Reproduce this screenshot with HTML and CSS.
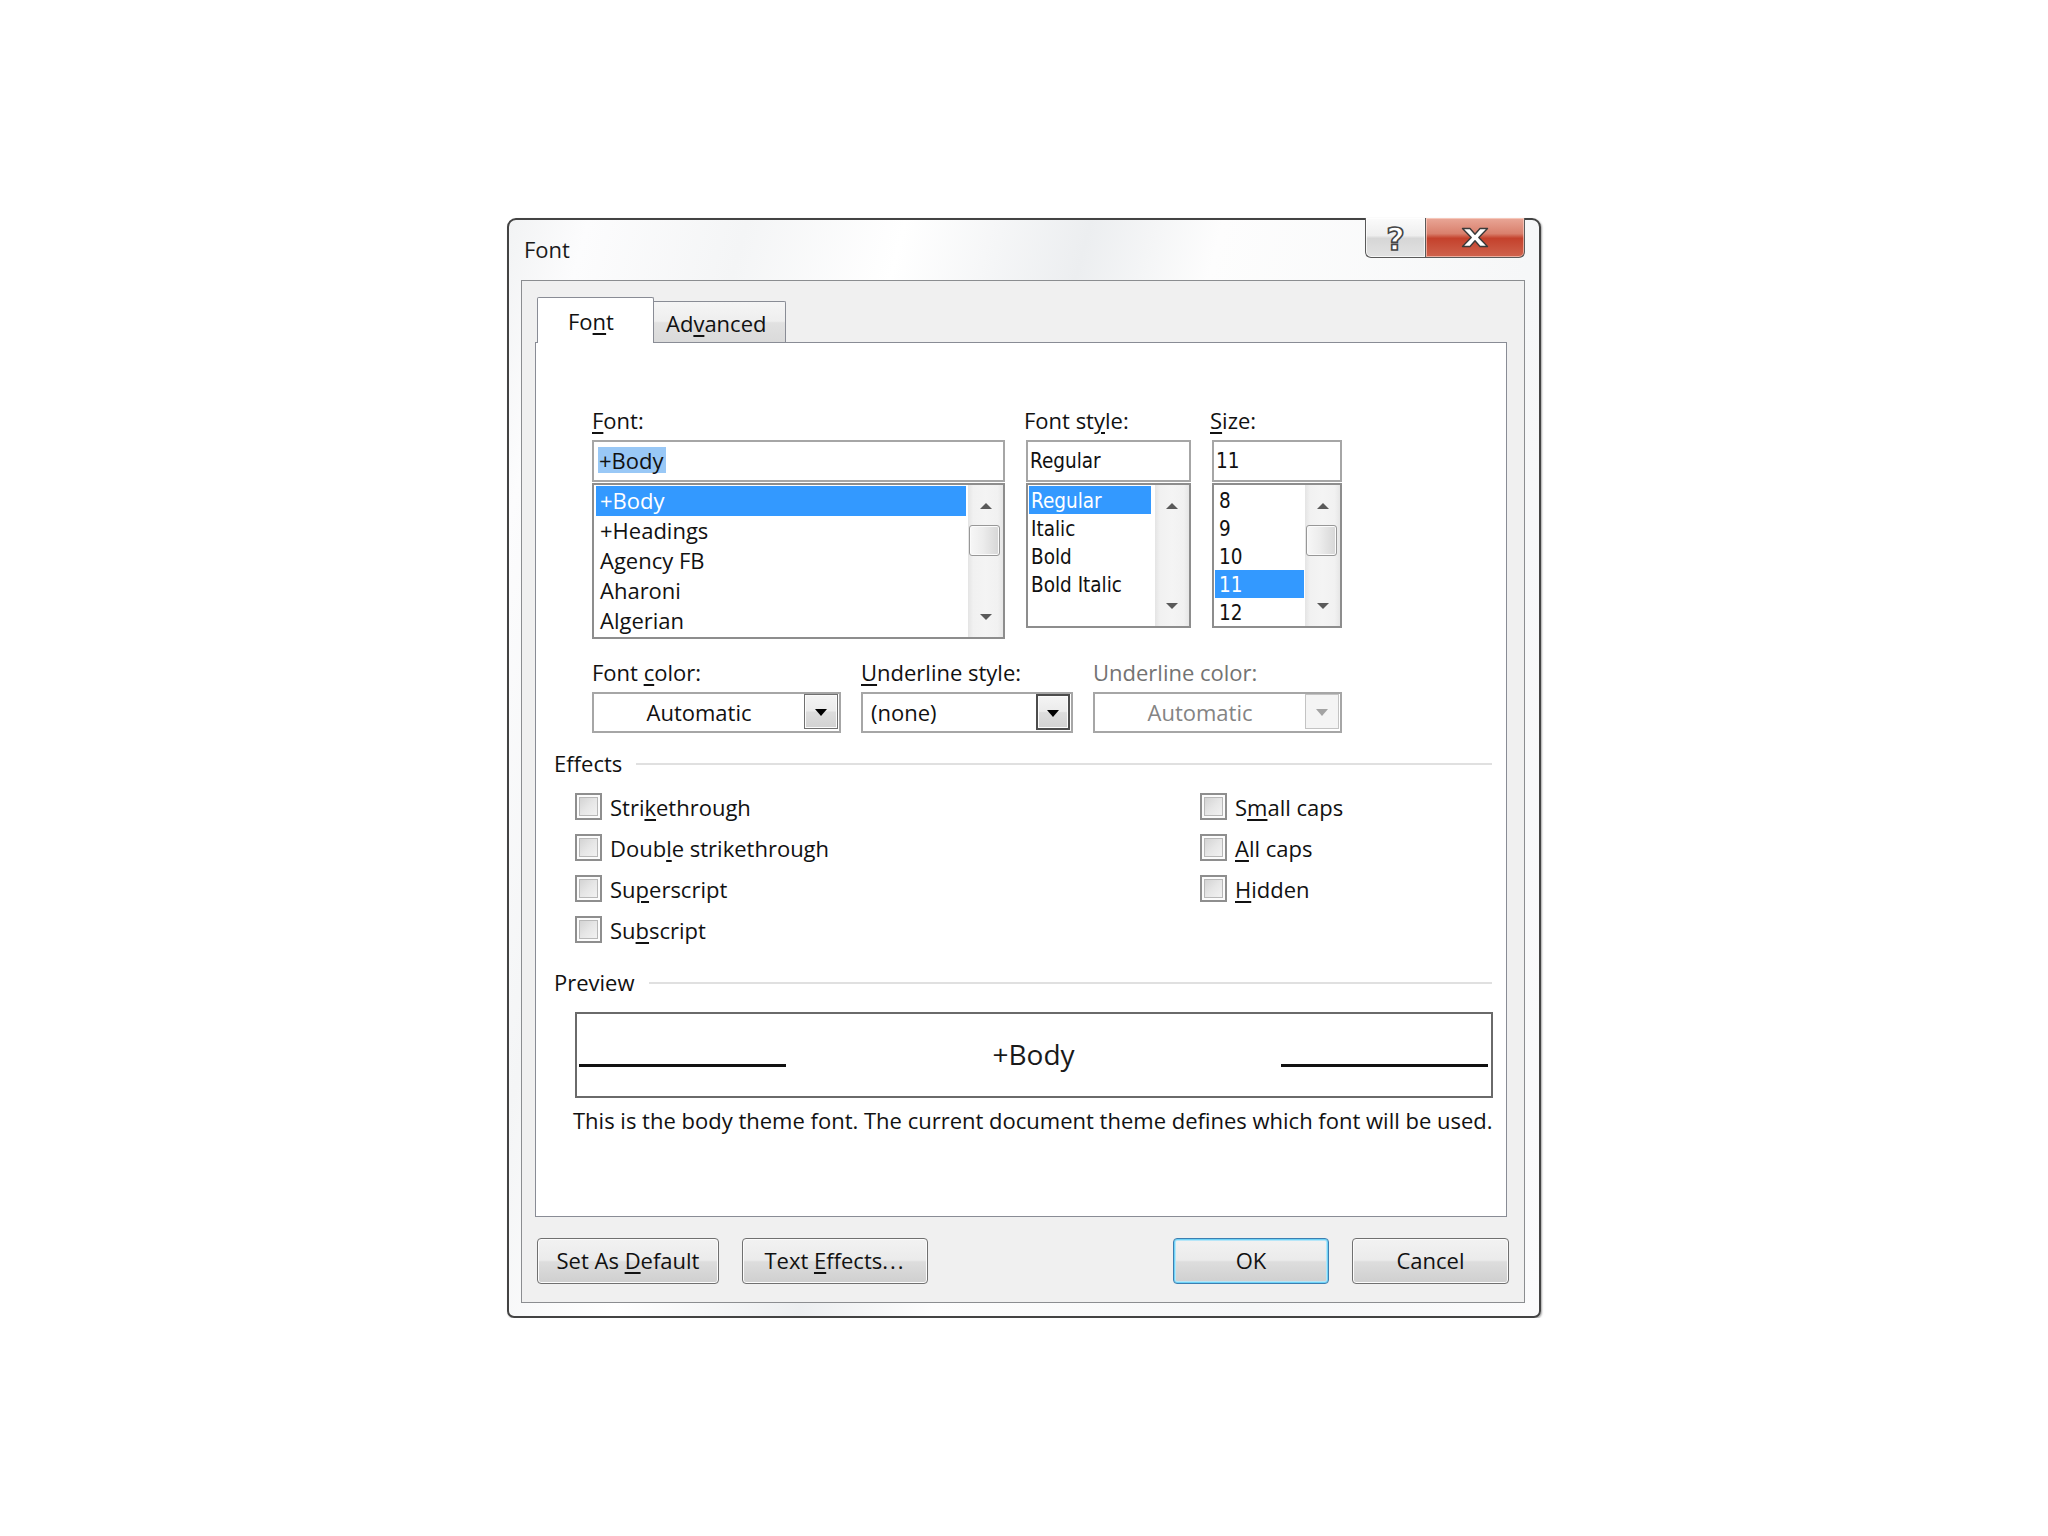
FILE: index.html
```html
<!DOCTYPE html>
<html lang="en">
<head>
<meta charset="utf-8">
<title>Font</title>
<link rel="stylesheet" href="styles.css">
</head>
<body>
<div class="window">
  <div class="titlebar">
    <span class="title">Font</span>
    <div class="caption-btns">
      <div class="cap help"><span class="qmark">?</span></div>
      <div class="cap close">
        <svg width="28" height="21" viewBox="0 0 28 21"><path d="M1.5 1.5H9L14 7.2L19 1.5H26.5L17.8 10.5L26.5 19.5H19L14 13.8L9 19.5H1.5L10.2 10.5Z" fill="#ffffff" stroke="#3a3a3a" stroke-width="1.4" stroke-linejoin="round"/></svg>
      </div>
    </div>
  </div>
  <div class="client">
    <div class="tabs">
      <div class="tab active">Fo<u>n</u>t</div>
      <div class="tab inactive">Ad<u>v</u>anced</div>
    </div>
    <div class="panel">
      <div class="row1">
        <div class="field">
          <span class="label"><u>F</u>ont:</span>
          <div class="input"><span class="hl">+Body</span></div>
          <div class="listbox lb-font">
            <ul class="items">
              <li class="sel">+Body</li>
              <li>+Headings</li>
              <li>Agency FB</li>
              <li>Aharoni</li>
              <li>Algerian</li>
            </ul>
            <div class="scrollbar">
              <div class="sb-btn up"><i class="arr-up"></i></div>
              <div class="thumb"></div>
              <div class="sb-fill"></div>
              <div class="sb-btn down"><i class="arr-down"></i></div>
            </div>
          </div>
        </div>
        <div class="field">
          <span class="label">Font st<u>y</u>le:</span>
          <div class="input tah">Regular</div>
          <div class="listbox lb-style">
            <ul class="items tah">
              <li class="sel">Regular</li>
              <li>Italic</li>
              <li>Bold</li>
              <li>Bold Italic</li>
            </ul>
            <div class="scrollbar">
              <div class="sb-btn up"><i class="arr-up"></i></div>
              <div class="sb-fill"></div>
              <div class="sb-btn down"><i class="arr-down"></i></div>
            </div>
          </div>
        </div>
        <div class="field">
          <span class="label"><u>S</u>ize:</span>
          <div class="input tah">11</div>
          <div class="listbox lb-size">
            <ul class="items tah">
              <li>8</li>
              <li>9</li>
              <li>10</li>
              <li class="sel">11</li>
              <li>12</li>
            </ul>
            <div class="scrollbar">
              <div class="sb-btn up"><i class="arr-up"></i></div>
              <div class="thumb"></div>
              <div class="sb-fill"></div>
              <div class="sb-btn down"><i class="arr-down"></i></div>
            </div>
          </div>
        </div>
      </div>

      <div class="row2">
        <div class="field">
          <span class="label">Font <u>c</u>olor:</span>
          <div class="combo">
            <div class="combo-text center">Automatic</div>
            <div class="dd-btn"><i class="arr-dd"></i></div>
          </div>
        </div>
        <div class="field">
          <span class="label"><u>U</u>nderline style:</span>
          <div class="combo">
            <div class="combo-text left">(none)</div>
            <div class="dd-btn focus"><i class="arr-dd"></i></div>
          </div>
        </div>
        <div class="field disabled">
          <span class="label">Underline color:</span>
          <div class="combo">
            <div class="combo-text center">Automatic</div>
            <div class="dd-btn"><i class="arr-dd"></i></div>
          </div>
        </div>
      </div>

      <div class="group-head effects-head"><span>Effects</span><div class="rule"></div></div>
      <div class="effects">
        <div class="check"><span class="box"></span><span>Stri<u>k</u>ethrough</span></div>
        <div class="check"><span class="box"></span><span>Doub<u>l</u>e strikethrough</span></div>
        <div class="check"><span class="box"></span><span>Su<u>p</u>erscript</span></div>
        <div class="check"><span class="box"></span><span>Su<u>b</u>script</span></div>
        <div class="check"><span class="box"></span><span>S<u>m</u>all caps</span></div>
        <div class="check"><span class="box"></span><span><u>A</u>ll caps</span></div>
        <div class="check"><span class="box"></span><span><u>H</u>idden</span></div>
      </div>

      <div class="group-head preview-head"><span>Preview</span><div class="rule"></div></div>
      <div class="preview-box">
        <div class="pline"></div>
        <div class="ptext">+Body</div>
        <div class="pline"></div>
      </div>
      <p class="desc">This is the body theme font. The current document theme defines which font will be used.</p>
    </div>

    <div class="buttons">
      <div class="btn w-default">Set As <u>D</u>efault</div>
      <div class="btn w-effects">Text <u>E</u>ffects<span class="dots">...</span></div>
      <div class="spacer"></div>
      <div class="btn ok w-ok">OK</div>
      <div class="btn w-cancel">Cancel</div>
    </div>
  </div>
</div>
</body>
</html>
```

FILE: styles.css
```css
* { box-sizing: border-box; }

html, body {
  margin: 0;
  padding: 0;
  background: #ffffff;
}

body {
  font-family: "Open Sans", "Noto Sans", sans-serif;
  font-size: 22px;
  line-height: 26px;
  color: #111111;
}

u {
  text-decoration: underline;
  text-decoration-thickness: 2px;
  text-underline-offset: 3px;
}

/* ---------- window frame ---------- */
.window {
  width: 1034px;
  height: 1100px;
  margin: 218px 0 0 507px;
  border: 2px solid #434343;
  border-radius: 9px 9px 7px 7px;
  background: linear-gradient(105deg, #f2f3f4 0%, #fcfcfd 6%, #f4f5f6 18%, #ffffff 30%, #eceef0 44%, #fdfdfd 54%, #f6f7f8 78%, #fbfbfc 100%);
  display: flex;
  flex-direction: column;
  box-shadow: 1px 1px 2px rgba(0,0,0,0.35);
}

.titlebar {
  height: 60px;
  flex: none;
  display: flex;
  justify-content: space-between;
  align-items: flex-start;
  padding: 0 14px 0 15px;
}

.title {
  padding-top: 16px;
  color: #1a1a1a;
}

.caption-btns {
  display: flex;
  margin-top: -2px;
}

.cap {
  height: 40px;
  border: 1px solid #5a5a5a;
  border-top: none;
  display: flex;
  align-items: center;
  justify-content: center;
}

.help {
  width: 60px;
  border-right: none;
  border-radius: 0 0 0 6px;
  background: linear-gradient(#fbfbfb 0%, #eeeeee 45%, #d6d6d6 52%, #e2e2e2 100%);
  box-shadow: inset 0 0 0 1px rgba(255,255,255,0.7);
}

.qmark {
  font-family: "DejaVu Sans", sans-serif;
  font-weight: bold;
  font-size: 32px;
  line-height: 32px;
  color: #ffffff;
  -webkit-text-stroke: 1.6px #454545;
  margin-top: 3px;
}

.close {
  width: 100px;
  border-radius: 0 0 6px 0;
  background: linear-gradient(#e9a797 0%, #d9806d 40%, #c4412c 52%, #cf634d 100%);
  box-shadow: inset 0 0 0 1px rgba(255,220,210,0.6);
}

/* ---------- client ---------- */
.client {
  flex: none;
  height: 1023px;
  margin: 0 14px 13px 12px;
  border: 1px solid #8b8d90;
  background: #f0f0f0;
  padding: 16px 17px 18px 13px;
  display: flex;
  flex-direction: column;
}

.tabs {
  height: 45px;
  display: flex;
  align-items: flex-end;
}

.tab {
  border: 1px solid #898c95;
  border-bottom: none;
  white-space: nowrap;
}

.tab.active {
  width: 117px;
  height: 46px;
  margin-left: 2px;
  margin-bottom: -1px;
  background: #ffffff;
  padding: 10px 0 0 30px;
  position: relative;
  z-index: 1;
  border-radius: 2px 2px 0 0;
}

.tab.inactive {
  width: 132px;
  height: 41px;
  border-left: none;
  background: linear-gradient(#f5f5f5 0%, #eeeeee 48%, #e1e1e1 52%, #dadada 100%);
  padding: 8px 0 0 12px;
  border-radius: 0 2px 0 0;
}

.panel {
  height: 875px;
  flex: none;
  border: 1px solid #898c95;
  background: #ffffff;
}

.label {
  display: block;
  height: 26px;
  margin-bottom: 7px;
  white-space: nowrap;
}

/* ---------- row 1 ---------- */
.row1 {
  display: grid;
  grid-template-columns: 413px 165px 130px;
  column-gap: 21px;
  align-items: start;
  margin: 64px 0 0 56px;
}

.row1 .field:nth-child(2) .label,
.row1 .field:nth-child(3) .label {
  margin-left: -2px;
}

.input {
  height: 42px;
  border: 2px solid #a6a6a6;
  background: #ffffff;
  padding: 5px 0 0 4px;
  white-space: nowrap;
}

.hl {
  background: #99c8f6;
  padding: 0 2px 0 1px;
  display: inline-block;
  height: 26px;
}

.tah {
  font-family: "DejaVu Sans Condensed", "DejaVu Sans", sans-serif;
  font-size: 20.5px;
}

.input.tah {
  padding-top: 6px;
  padding-left: 2px;
}

.listbox {
  margin-top: 1px;
  border: 2px solid #8d8d8d;
  background: #ffffff;
  display: flex;
}

.lb-font { height: 156px; }
.lb-style { height: 145px; }
.lb-size { height: 145px; }

.items {
  list-style: none;
  margin: 0;
  flex: 1;
  overflow: hidden;
}

.items li {
  white-space: nowrap;
  padding-left: 4px;
}

.lb-font .items {
  padding: 1px 2px 0 2px;
}

.lb-font .items li {
  height: 30px;
  line-height: 26px;
  padding-top: 1px;
}

.lb-style .items,
.lb-size .items {
  padding: 1px 4px 0 1px;
}

.lb-style .items li {
  padding-left: 2px;
}

.lb-size .items {
  padding-right: 1px;
}

.lb-style .items li,
.lb-size .items li {
  height: 28px;
  line-height: 28px;
  padding-top: 1px;
}

.items li.sel {
  background: #3399ff;
  color: #ffffff;
}

/* scrollbar */
.scrollbar {
  width: 35px;
  flex: none;
  display: flex;
  flex-direction: column;
  background: linear-gradient(to right, #e4e4e4 0%, #f1f1f1 15%, #f4f4f4 50%, #f1f1f1 85%, #e6e6e6 100%);
}

.lb-style .scrollbar { width: 34px; }

.sb-btn {
  height: 40px;
  flex: none;
  display: flex;
  align-items: center;
  justify-content: center;
}

.sb-btn.up { padding-top: 2px; }

.sb-fill { flex: 1; }

.thumb {
  height: 31px;
  width: 31px;
  margin-left: 1px;
  border: 1px solid #979797;
  border-radius: 3px;
  background: linear-gradient(to right, #f7f7f7 0%, #ececec 45%, #d6d6d6 100%);
  box-shadow: inset 0 0 0 1px #fbfbfb;
}

.arr-up {
  width: 0;
  height: 0;
  border-left: 6px solid transparent;
  border-right: 6px solid transparent;
  border-bottom: 6px solid #5a5a5a;
}

.arr-down {
  width: 0;
  height: 0;
  border-left: 6px solid transparent;
  border-right: 6px solid transparent;
  border-top: 6px solid #5a5a5a;
}

/* ---------- row 2 ---------- */
.row2 {
  display: grid;
  grid-template-columns: 249px 212px 249px;
  column-gap: 20px;
  align-items: start;
  margin: 20px 0 0 56px;
}

.combo {
  height: 41px;
  border: 2px solid #a6a6a6;
  background: #ffffff;
  display: flex;
  align-items: flex-start;
  padding-right: 1px;
}

.combo-text {
  flex: 1;
  padding-top: 5px;
  white-space: nowrap;
}

.combo-text.center { text-align: center; }
.combo-text.left { padding-left: 8px; }

.dd-btn {
  width: 34px;
  height: 35px;
  border: 1px solid #707070;
  background: linear-gradient(#f4f4f4 0%, #ebebeb 48%, #dddddd 52%, #d2d2d2 100%);
  box-shadow: inset 0 0 0 1px #fbfbfb;
  display: flex;
  align-items: center;
  justify-content: center;
}

.dd-btn.focus {
  border: 2px solid #4c4c4c;
  height: 36px;
}

.arr-dd {
  width: 0;
  height: 0;
  border-left: 6px solid transparent;
  border-right: 6px solid transparent;
  border-top: 7px solid #000000;
  margin-top: 2px;
}

.disabled .label { color: #737373; }
.disabled .combo-text { color: #848484; }
.disabled .dd-btn {
  border-color: #c3c3c3;
  background: #f4f4f4;
  box-shadow: none;
}
.disabled .arr-dd { border-top-color: #a3a3a3; }

/* ---------- group headings ---------- */
.group-head {
  display: flex;
  align-items: center;
  height: 26px;
  margin: 0 14px 0 18px;
}

.group-head .rule {
  flex: 1;
  height: 2px;
  background: #e0e0e0;
  margin: 2px 0 0 14px;
}

.effects-head { margin-top: 17px; }
.preview-head { margin-top: 19px; }

/* ---------- effects ---------- */
.effects {
  display: grid;
  grid-template-columns: 625px auto;
  grid-template-rows: repeat(4, 41px);
  grid-auto-flow: column;
  margin: 10px 0 0 39px;
}

.check {
  display: flex;
  align-items: center;
  gap: 8px;
  white-space: nowrap;
}

.box {
  width: 27px;
  height: 27px;
  flex: none;
  border: 2px solid #8e8e8e;
  background: linear-gradient(135deg, #cdcdcd 0%, #e6e6e6 50%, #f6f6f6 100%);
  box-shadow: inset 0 0 0 2px #fcfcfc, inset 0 0 0 3px #b8b8b8;
}

/* ---------- preview ---------- */
.preview-box {
  width: 918px;
  height: 86px;
  margin: 17px 0 0 39px;
  border: 2px solid #6a6a6a;
  display: grid;
  grid-template-columns: 207px 1fr 207px;
  align-items: start;
  padding: 0 3px 0 2px;
}

.pline {
  height: 3px;
  background: #111111;
  margin-top: 50px;
}

.ptext {
  text-align: center;
  font-size: 28px;
  line-height: 34px;
  padding-top: 23px;
  color: #1a1a1a;
}

.desc {
  margin: 9px 0 0 37px;
  white-space: nowrap;
}

/* ---------- buttons ---------- */
.buttons {
  display: flex;
  height: 46px;
  margin: 21px -2px 0 2px;
}

.spacer { flex: 1; }

.btn {
  height: 46px;
  border: 1px solid #707070;
  border-radius: 4px;
  background: linear-gradient(#f2f2f2 0%, #ebebeb 48%, #dddddd 52%, #cfcfcf 100%);
  box-shadow: inset 0 0 0 1px #fcfcfc;
  text-align: center;
  padding-top: 8px;
  white-space: nowrap;
}

.dots {
  letter-spacing: 2px;
}

.btn.ok {
  border-color: #3c7fb1;
  box-shadow: inset 0 0 0 1px #6fd3f7, inset 0 0 0 2px #b6e6f8;
}

.w-default { width: 182px; }
.w-effects { width: 186px; margin-left: 23px; }
.w-ok { width: 156px; }
.w-cancel { width: 157px; margin-left: 23px; }
```
